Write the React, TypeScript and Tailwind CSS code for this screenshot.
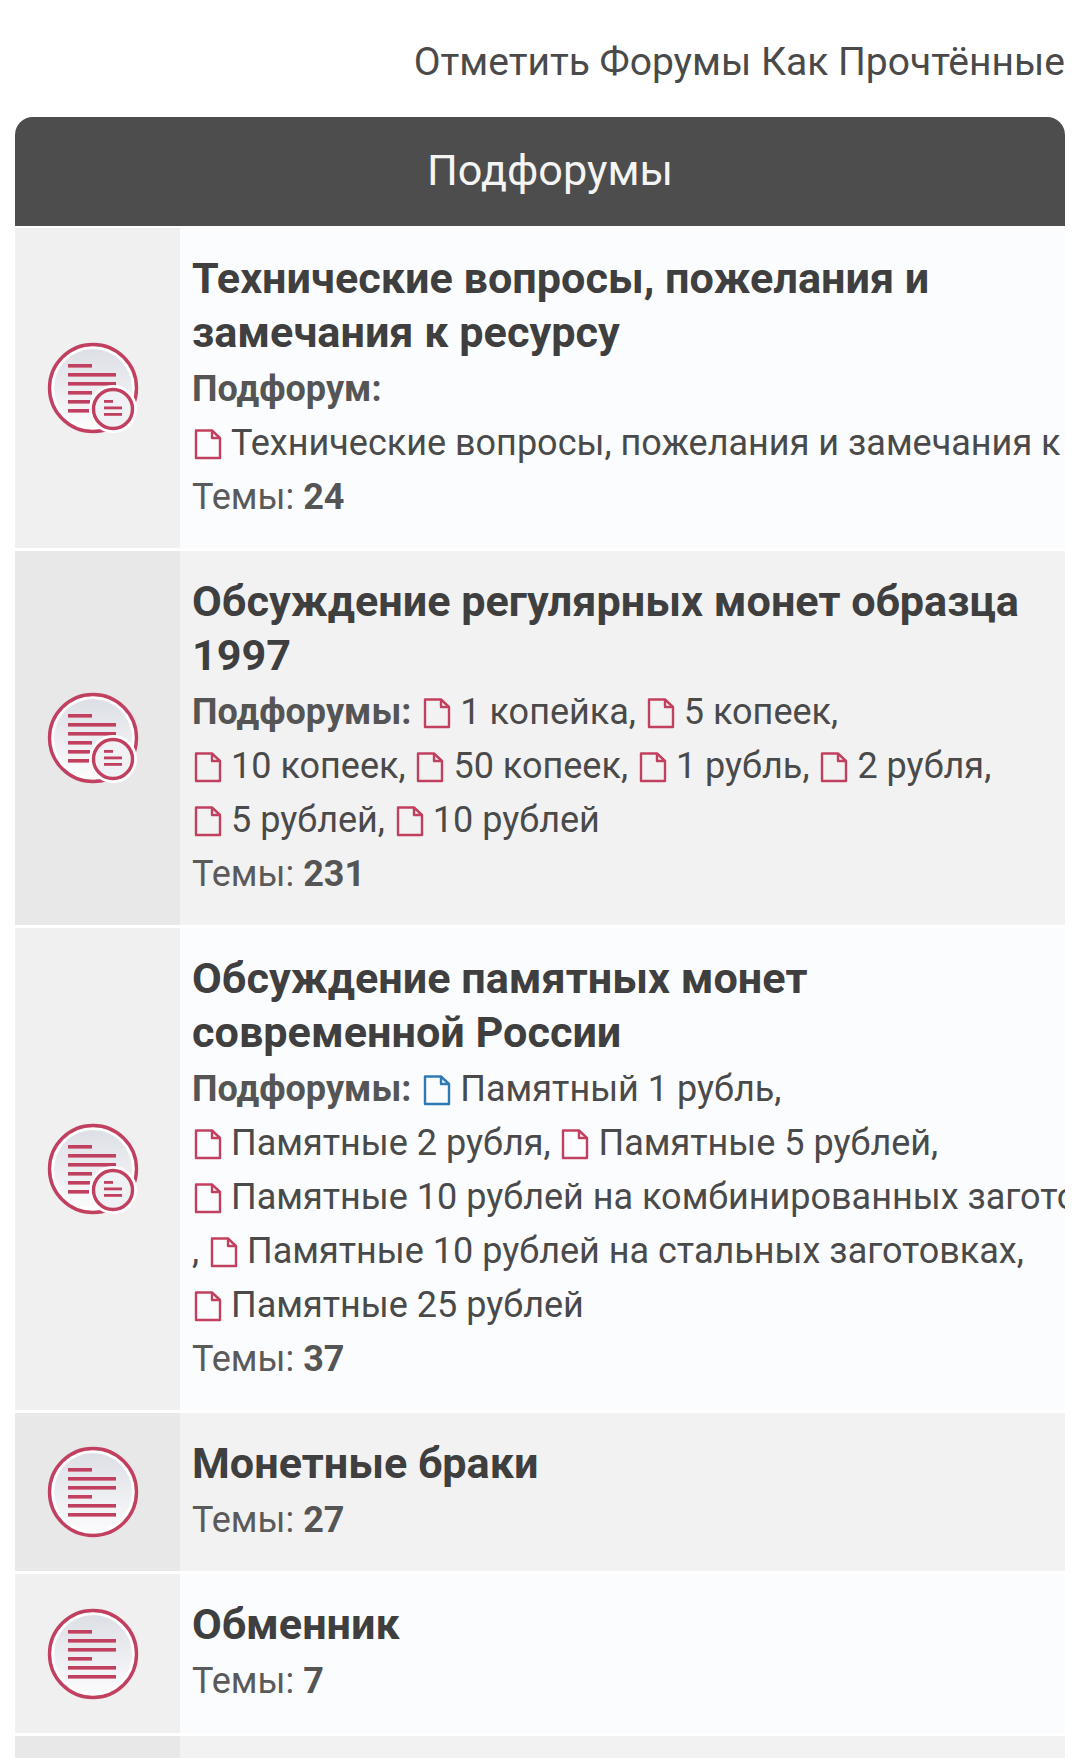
import React from 'react';

const DocIcon = ({ blue }: { blue?: boolean }) => (
  <svg
    width="28"
    height="32"
    viewBox="0 0 28 32"
    fill="none"
    stroke={blue ? '#2f7ab5' : '#c2405f'}
    strokeWidth="2.4"
    strokeLinejoin="round"
    className="inline-block align-[-5px] mr-[9px] ml-[2px]"
  >
    <path d="M2 2.5 H18 L26 10 V30 H2 Z" />
    <path d="M18 2.5 V10 H26" />
  </svg>
);

const ForumIcon = ({ sub }: { sub?: boolean }) => {
  const id = sub ? 'grad-sub' : 'grad-plain';
  return (
    <svg width="92" height="92" viewBox="0 0 92 92">
      <defs>
        <linearGradient id={id} x1="0" y1="0" x2="0" y2="1">
          <stop offset="0" stopColor="#dcdfe5" />
          <stop offset="1" stopColor="#fbfbfc" />
        </linearGradient>
      </defs>
      <circle cx="46" cy="46" r="43.5" fill="#fff" stroke="#c2405f" strokeWidth="3.4" />
      <circle cx="46" cy="46" r="39" fill={`url(#${id})`} />
      <g fill="#c2405f">
        <rect x="21" y="22" width="24" height="3.6" />
        <rect x="21" y="31" width="48" height="3.6" />
        <rect x="21" y="40" width="48" height="3.6" />
        <rect x="21" y="49" width="24" height="3.6" />
        {sub ? (
          <>
            <rect x="21" y="58" width="22" height="3.6" />
            <rect x="21" y="67" width="21" height="3.6" />
          </>
        ) : (
          <>
            <rect x="21" y="58" width="48" height="3.6" />
            <rect x="21" y="67" width="48" height="3.6" />
          </>
        )}
      </g>
      {sub && (
        <g>
          <circle cx="66" cy="67" r="24" fill="#fff" />
          <circle cx="66" cy="67" r="19.5" fill="#f0f1f4" stroke="#c2405f" strokeWidth="3.4" />
          <g fill="#c2405f">
            <rect x="57" y="58" width="9" height="2.8" />
            <rect x="57" y="64.5" width="18" height="2.8" />
            <rect x="57" y="71" width="18" height="2.8" />
          </g>
        </g>
      )}
    </svg>
  );
};

type Sub = { name: string; blue?: boolean };

type Forum = {
  title: string[];
  label?: string;
  subs?: Sub[];
  count?: string;
  sub?: boolean;
  alt?: boolean;
  className?: string;
};

const forums: Forum[] = [
  {
    title: ['Технические вопросы, пожелания и', 'замечания к ресурсу'],
    label: 'Подфорум:',
    subs: [{ name: 'Технические вопросы, пожелания и замечания к ресурсу' }],
    count: '24',
    sub: true,
    className: 'h-[320px]',
  },
  {
    title: ['Обсуждение регулярных монет образца', '1997'],
    label: 'Подфорумы:',
    subs: [
      { name: '1 копейка' },
      { name: '5 копеек' },
      { name: '10 копеек' },
      { name: '50 копеек' },
      { name: '1 рубль' },
      { name: '2 рубля' },
      { name: '5 рублей' },
      { name: '10 рублей' },
    ],
    count: '231',
    sub: true,
    alt: true,
    className: 'h-[374px]',
  },
  {
    title: ['Обсуждение памятных монет', 'современной России'],
    label: 'Подфорумы:',
    subs: [
      { name: 'Памятный 1 рубль', blue: true },
      { name: 'Памятные 2 рубля' },
      { name: 'Памятные 5 рублей' },
      { name: 'Памятные 10 рублей на комбинированных заготовках' },
      { name: 'Памятные 10 рублей на стальных заготовках' },
      { name: 'Памятные 25 рублей' },
    ],
    count: '37',
    sub: true,
    className: 'h-[482px]',
  },
  { title: ['Монетные браки'], count: '27', alt: true, className: 'h-[158px]' },
  { title: ['Обменник'], count: '7', className: 'h-[159px]' },
  { title: [], alt: true, className: 'h-[60px]' },
];

const ForumRow = ({ forum }: { forum: Forum }) => (
  <div className={`flex shrink-0 ${forum.className} ${forum.alt ? 'bg-[#f2f2f2]' : 'bg-[#fbfcfe]'}`}>
    <div
      className={`w-[165px] shrink-0 flex items-center pl-[32px] ${forum.alt ? 'bg-[#e8e8e8]' : 'bg-[#f0f0f0]'}`}
    >
      {forum.title.length > 0 && <ForumIcon sub={forum.sub} />}
    </div>
    <div className="flex-1 min-w-0 overflow-hidden pl-[12px] pr-[22px] pt-[24px] text-[36px] leading-[54px] text-[#4a4a4a]">
      {forum.title.map((line) => (
        <div key={line} className="text-[43.2px] font-bold text-[#3f3f3f] whitespace-nowrap">
          {line}
        </div>
      ))}
      {forum.subs && (
        <div className="mt-[2px]">
          <span className="font-bold text-[#555555] mr-[10px]">{forum.label}</span>
          {forum.subs.length === 1 && <br />}
          {forum.subs.map((s, i) => (
            <React.Fragment key={s.name}>
              <span className="inline-block whitespace-nowrap">
                <DocIcon blue={s.blue} />
                {s.name}
              </span>
              {i < forum.subs!.length - 1 ? ', ' : ''}
            </React.Fragment>
          ))}
        </div>
      )}
      {forum.count && (
        <div className={forum.subs ? '' : 'mt-[2px]'}>
          <span className="text-[#5a5a5a]">Темы: </span>
          <span className="font-bold text-[#555555]">{forum.count}</span>
        </div>
      )}
    </div>
  </div>
);

export default function App() {
  return (
    <div className="w-[1080px] h-[1758px] overflow-hidden bg-white font-['Roboto',sans-serif]">
      <div className="h-[117px] pr-[15px] pt-[35px] text-right text-[39px] leading-[54px] text-[#4a4a4a]">
        Отметить Форумы Как Прочтённые
      </div>
      <div className="mx-[15px]">
        <div className="h-[109px] rounded-t-[18px] bg-[#4d4d4d] flex items-center justify-center pl-[20px] text-[43.2px] text-[#f4f4f4]">
          Подфорумы
        </div>
        <div className="flex flex-col gap-[3px] pt-[2px]">
          {forums.map((f, i) => (
            <ForumRow key={i} forum={f} />
          ))}
        </div>
      </div>
    </div>
  );
}
